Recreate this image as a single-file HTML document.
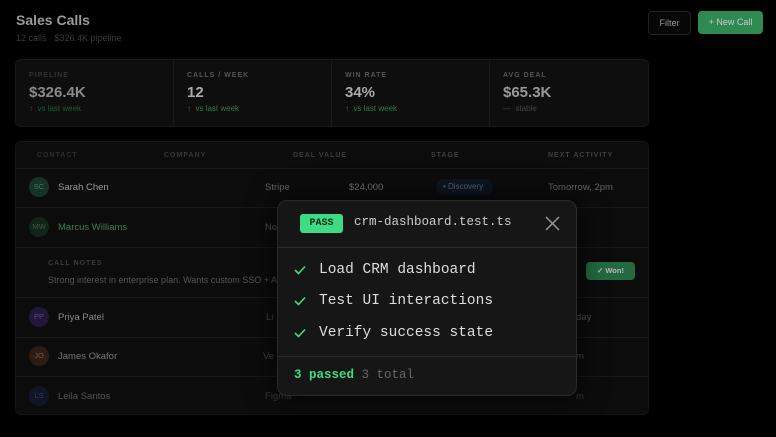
<!DOCTYPE html>
<html><head><meta charset="utf-8"><style>
*{margin:0;padding:0;box-sizing:border-box}
body{width:776px;height:437px;background:#000;font-family:"Liberation Sans",sans-serif;position:relative;overflow:hidden;color:#ccc}
.a{position:absolute}
.mono{font-family:"Liberation Mono",monospace}
.lbl{font-size:7px;letter-spacing:1px;font-weight:bold;color:#555}
.row{position:absolute;left:15px;width:634px;border-top:1px solid #1a1a1a}
.av{position:absolute;width:20px;height:20px;border-radius:50%;font-size:7.5px;text-align:center;line-height:20px;color:#777}
.nm{position:absolute;font-size:9.5px;color:#999}
.c{position:absolute;font-size:9.5px;color:#666}
</style></head><body>
<div class="a" style="left:16px;top:12px;font-size:14px;font-weight:bold;color:#9a9a9a">Sales Calls</div>
<div class="a" style="left:16px;top:33px;font-size:9px;color:#3a3a3a">12 calls · $326.4K pipeline</div>
<div class="a" style="left:648px;top:11px;width:43px;height:24px;border:1px solid #222;border-radius:4px;background:#070707;font-size:9px;color:#999;text-align:center;line-height:22px">Filter</div>
<div class="a" style="left:698px;top:11px;width:65px;height:23px;border-radius:4px;background:#2f8a52;font-size:9px;color:#ccc;text-align:center;line-height:23px">+ New Call</div>

<div class="a" style="left:15px;top:59px;width:634px;height:68px;background:#0e0e0e;border:1px solid #181818;border-radius:6px"></div>
<div class="a" style="left:173px;top:60px;width:1px;height:66px;background:#1a1a1a"></div>
<div class="a" style="left:331px;top:60px;width:1px;height:66px;background:#1a1a1a"></div>
<div class="a" style="left:489px;top:60px;width:1px;height:66px;background:#1a1a1a"></div>
<div class="a lbl" style="left:29px;top:72px;color:#333">PIPELINE</div>
<div class="a lbl" style="left:187px;top:72px">CALLS / WEEK</div>
<div class="a lbl" style="left:345px;top:72px">WIN RATE</div>
<div class="a lbl" style="left:503px;top:72px">AVG DEAL</div>
<div class="a" style="left:29px;top:84px;font-size:15px;font-weight:bold;color:#8a8a8a">$326.4K</div>
<div class="a" style="left:187px;top:84px;font-size:15px;font-weight:bold;color:#aaa">12</div>
<div class="a" style="left:345px;top:84px;font-size:15px;font-weight:bold;color:#aaa">34%</div>
<div class="a" style="left:503px;top:84px;font-size:15px;font-weight:bold;color:#999">$65.3K</div>
<div class="a" style="left:29px;top:104px;font-size:8px;color:#1f5a35">↑&nbsp; vs last week</div>
<div class="a" style="left:187px;top:104px;font-size:8px;color:#2f7a48">↑&nbsp; vs last week</div>
<div class="a" style="left:345px;top:104px;font-size:8px;color:#2f7a48">↑&nbsp; vs last week</div>
<div class="a" style="left:503px;top:104px;font-size:8px;color:#444">—&nbsp; stable</div>

<div class="a" style="left:15px;top:141px;width:634px;height:274px;background:#0c0c0c;border:1px solid #151515;border-radius:6px"></div>
<div class="a lbl" style="left:37px;top:152px;color:#2e2e2e">CONTACT</div>
<div class="a lbl" style="left:164px;top:152px;color:#383838">COMPANY</div>
<div class="a lbl" style="left:293px;top:152px;color:#3c3c3c">DEAL VALUE</div>
<div class="a lbl" style="left:431px;top:152px;color:#404040">STAGE</div>
<div class="a lbl" style="left:548px;top:152px;color:#404040">NEXT ACTIVITY</div>
<div class="row" style="top:168px"></div>
<div class="row" style="top:207px"></div>
<div class="row" style="top:247px"></div>
<div class="row" style="top:297px"></div>
<div class="row" style="top:337px"></div>
<div class="row" style="top:376px"></div>

<div class="av" style="left:29px;top:177px;background:#163328;color:#4a7a68">SC</div>
<div class="nm" style="left:58px;top:182px">Sarah Chen</div>
<div class="c" style="left:265px;top:182px">Stripe</div>
<div class="c" style="left:349px;top:182px;color:#777">$24,000</div>
<div class="a" style="left:436px;top:179px;width:57px;height:16px;border-radius:8px;background:#0e1520;font-size:8px;color:#4a6a90;line-height:16px;padding-left:7px">• Discovery</div>
<div class="c" style="left:548px;top:182px">Tomorrow, 2pm</div>

<div class="av" style="left:29px;top:217px;background:#12241a;color:#3f5a48">MW</div>
<div class="nm" style="left:58px;top:222px;color:#3a8052">Marcus Williams</div>
<div class="c" style="left:265px;top:222px;color:#555">No</div>
<div class="a lbl" style="left:48px;top:260px;color:#3a3a3a">CALL NOTES</div>
<div class="c" style="left:48px;top:275px;font-size:9px;color:#555">Strong interest in enterprise plan. Wants custom SSO + A</div>
<div class="a" style="left:586px;top:262px;width:49px;height:18px;border-radius:4px;background:#246a40;font-size:7.5px;color:#bbb;text-align:center;line-height:18px;font-weight:bold">✓ Won!</div>

<div class="av" style="left:29px;top:307px;background:#22163a;color:#5a4a7a">PP</div>
<div class="nm" style="left:58px;top:312px;color:#888">Priya Patel</div>
<div class="c" style="left:266px;top:312px;color:#444">Li</div>
<div class="c" style="left:576px;top:312px;color:#555">day</div>
<div class="av" style="left:29px;top:346px;background:#2e1c12;color:#7a5a4a">JO</div>
<div class="nm" style="left:58px;top:351px;color:#777">James Okafor</div>
<div class="c" style="left:263px;top:351px;color:#444">Ve</div>
<div class="c" style="left:576px;top:351px;color:#555">m</div>
<div class="av" style="left:29px;top:386px;background:#101628;color:#2e3a58">LS</div>
<div class="nm" style="left:58px;top:391px;color:#555">Leila Santos</div>
<div class="c" style="left:265px;top:391px;color:#3a3a3a">Figma</div>
<div class="c" style="left:576px;top:391px;color:#3a3a3a">m</div>

<div class="a" style="left:277px;top:200px;width:300px;height:196px;background:#161616;border:1px solid #2a2a2a;border-radius:10px;box-shadow:0 0 30px rgba(0,0,0,.8)"></div>
<div class="a" style="left:278px;top:247px;width:298px;height:1px;background:#2c2c2c"></div>
<div class="a" style="left:278px;top:356px;width:298px;height:1px;background:#2c2c2c"></div>
<div class="a mono" style="left:300px;top:214px;width:43px;height:19px;border-radius:3px;background:#3ddc84;color:#0a2a16;font-size:10px;font-weight:bold;text-align:center;line-height:19px">PASS</div>
<div class="a mono" style="left:354px;top:215px;font-size:12.5px;color:#ccc">crm-dashboard.test.ts</div>
<svg class="a" style="left:545px;top:216px" width="15" height="15"><path d="M1 1L14 14M14 1L1 14" stroke="#999" stroke-width="1.5"/></svg>
<svg class="a" style="left:294px;top:265px" width="12" height="10"><path d="M1 5L4.5 8.5L11 1.5" stroke="#3ddc84" stroke-width="1.6" fill="none"/></svg>
<svg class="a" style="left:294px;top:296px" width="12" height="10"><path d="M1 5L4.5 8.5L11 1.5" stroke="#3ddc84" stroke-width="1.6" fill="none"/></svg>
<svg class="a" style="left:294px;top:328px" width="12" height="10"><path d="M1 5L4.5 8.5L11 1.5" stroke="#3ddc84" stroke-width="1.6" fill="none"/></svg>
<div class="a mono" style="left:319px;top:262px;font-size:14.5px;color:#ddd">Load CRM dashboard</div>
<div class="a mono" style="left:319px;top:293px;font-size:14.5px;color:#ddd">Test UI interactions</div>
<div class="a mono" style="left:319px;top:325px;font-size:14.5px;color:#ddd">Verify success state</div>
<div class="a mono" style="left:294px;top:368px;font-size:12.5px;color:#666"><b style="color:#3ddc84">3 passed</b> 3 total</div>
</body></html>
